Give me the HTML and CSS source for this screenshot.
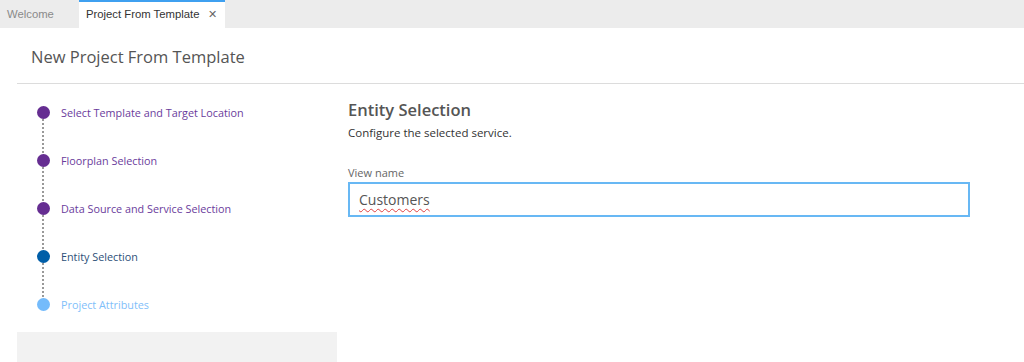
FILE: index.html
```html
<!DOCTYPE html>
<html lang="en">
<head>
  <meta charset="UTF-8" />
  <title>New Project From Template</title>
  <link rel="stylesheet" href="styles.css">
</head>
<body>
  <div class="tabs">
    <div class="tab">Welcome</div>
    <div class="tab active">Project From Template <span class="close">&#x2715;</span></div>
  </div>

  <div class="page">
    <div class="header">New Project From Template</div>

    <div class="main">
      <div class="sidebar">
        <ul class="steps">
          <li class="step done"><span class="dot"></span>Select Template and Target Location</li>
          <li class="step done"><span class="dot"></span>Floorplan Selection</li>
          <li class="step done"><span class="dot"></span>Data Source and Service Selection</li>
          <li class="step current"><span class="dot"></span>Entity Selection</li>
          <li class="step next"><span class="dot"></span>Project Attributes</li>
        </ul>
        <div class="sidebar-foot"></div>
      </div>

      <div class="content">
        <h2>Entity Selection</h2>
        <p class="sub">Configure the selected service.</p>
        <label for="viewName">View name</label>
        <div class="input"><span class="typo">Customers</span></div>
      </div>
    </div>
  </div>
</body>
</html>
```

FILE: styles.css
```css
* {
  margin: 0;
  padding: 0;
  box-sizing: border-box;
}
body {
  font-family: "Open Sans", "Noto Sans", sans-serif;
  background-color: #fff;
  width: 1024px;
  height: 362px;
  overflow: hidden;
}
.tabs {
  display: flex;
  height: 28px;
  background-color: #ececec;
  font-family: "Liberation Sans", Arial, sans-serif;
  font-size: 11.3px;
  white-space: nowrap;
}
.tab {
  display: flex;
  align-items: center;
  padding: 0 7px;
  width: 79px;
  color: #8a8a8a;
}
.tab.active {
  width: 146px;
  background-color: #fff;
  color: #333;
  border-top: 2px solid #3fa0f0;
  padding-bottom: 2px;
}
.close {
  margin-left: 9px;
  font-size: 11px;
  color: #666;
}
.header {
  margin-left: 17px;
  padding: 17px 0 0 14px;
  height: 56px;
  border-bottom: 1px solid #dcdcdc;
  font-size: 16.5px;
  color: #555;
}
.main {
  display: flex;
}
.sidebar {
  width: 320px;
  margin-left: 17px;
  padding-top: 4px;
}
.steps {
  list-style: none;
}
.step {
  position: relative;
  display: flex;
  align-items: center;
  height: 48px;
  padding-left: 20px;
  font-size: 10.8px;
}
.step:not(:last-child)::after {
  content: "";
  position: absolute;
  left: 25px;
  top: 31px;
  height: 34px;
  border-left: 2px dotted #999;
}
.dot {
  width: 13px;
  height: 13px;
  border-radius: 50%;
  margin-right: 11px;
}
.done {
  color: #6a3b9c;
}
.done .dot {
  background-color: #652d91;
}
.current {
  color: #2c4f78;
}
.current .dot {
  background-color: #005ea8;
}
.next {
  color: #7fc0fa;
}
.next .dot {
  background-color: #74bbfb;
}
.sidebar-foot {
  height: 40px;
  margin-top: 4px;
  background-color: #f2f2f2;
}
.content {
  padding-left: 11px;
  padding-top: 15px;
  width: 633px;
}
h2 {
  font-size: 16.5px;
  font-weight: 600;
  color: #555;
  line-height: 22px;
}
.sub {
  font-size: 11.5px;
  color: #333;
  margin-top: 4px;
}
label {
  display: block;
  margin-top: 25px;
  font-size: 11px;
  color: #666;
}
.input {
  margin-top: 2px;
  height: 35px;
  border: 2px solid #68b8f4;
  padding: 6px 9px;
  font-size: 14px;
  color: #555;
}
.typo {
  text-decoration: underline wavy #e04040;
  text-decoration-thickness: 1px;
  text-underline-offset: 3px;
}
```
